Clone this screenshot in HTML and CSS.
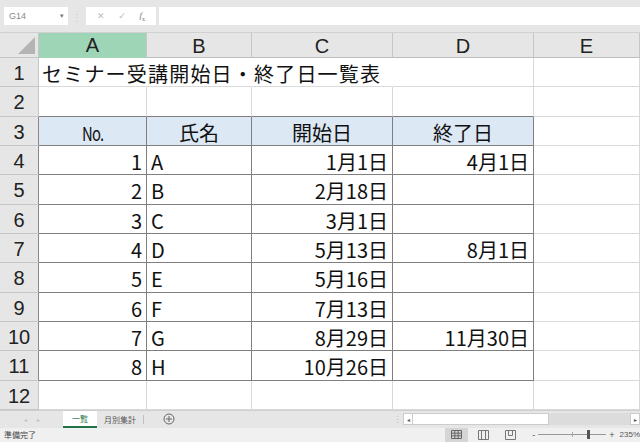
FILE: index.html
```html
<!DOCTYPE html>
<html lang="ja">
<head>
<meta charset="utf-8">
<title>セミナー受講開始日・終了日一覧表</title>
<link rel="stylesheet" href="styles.css">
</head>
<body>
<div class="app">
  <div class="fbar">
    <div class="namebox"><span>G14</span><span class="dd">▾</span></div>
    <div class="dots">⋮</div>
    <div class="fbtns"><span class="x">✕</span><span class="ok">✓</span><span class="fx"><i>f</i><sub>x</sub></span></div>
    <div class="finput"></div>
  </div>
  <div class="sheet">
    <div class="corner"><svg width="20" height="20" viewBox="0 0 20 20"><polygon points="19,2 19,19 2,19" fill="#b4b4b4"/></svg></div>
    <div class="ch sel">A</div><div class="ch">B</div><div class="ch">C</div><div class="ch">D</div><div class="ch">E</div>

    <div class="rh">1</div><div class="c title nr">セミナー受講開始日・終了日一覧表</div><div class="c nr"></div><div class="c nr"></div><div class="c"></div><div class="c"></div>
    <div class="rh">2</div><div class="c tb"></div><div class="c tb"></div><div class="c tb"></div><div class="c tb"></div><div class="c"></div>
    <div class="rh tl">3</div><div class="c t hd"><span class="no">No.</span></div><div class="c t hd">氏名</div><div class="c t hd">開始日</div><div class="c t hd">終了日</div><div class="c"></div>
    <div class="rh tl">4</div><div class="c t r">1</div><div class="c t">A</div><div class="c t r">1月1日</div><div class="c t r">4月1日</div><div class="c"></div>
    <div class="rh tl">5</div><div class="c t r">2</div><div class="c t">B</div><div class="c t r">2月18日</div><div class="c t r"></div><div class="c"></div>
    <div class="rh tl">6</div><div class="c t r">3</div><div class="c t">C</div><div class="c t r">3月1日</div><div class="c t r"></div><div class="c"></div>
    <div class="rh tl">7</div><div class="c t r">4</div><div class="c t">D</div><div class="c t r">5月13日</div><div class="c t r">8月1日</div><div class="c"></div>
    <div class="rh tl">8</div><div class="c t r">5</div><div class="c t">E</div><div class="c t r">5月16日</div><div class="c t r"></div><div class="c"></div>
    <div class="rh tl">9</div><div class="c t r">6</div><div class="c t">F</div><div class="c t r">7月13日</div><div class="c t r"></div><div class="c"></div>
    <div class="rh tl">10</div><div class="c t r">7</div><div class="c t">G</div><div class="c t r">8月29日</div><div class="c t r">11月30日</div><div class="c"></div>
    <div class="rh tl">11</div><div class="c t r">8</div><div class="c t">H</div><div class="c t r">10月26日</div><div class="c t r"></div><div class="c"></div>
    <div class="rh">12</div><div class="c"></div><div class="c"></div><div class="c"></div><div class="c"></div><div class="c"></div>
  </div>
  <div class="tabbar">
    <div class="nav"><span>◂</span><span>▸</span></div>
    <div class="tab active">一覧</div>
    <div class="tab">月別集計</div>
    <div class="tsep"></div>
    <div class="add"><svg width="12" height="12" viewBox="0 0 12 12"><circle cx="6" cy="6" r="5" fill="none" stroke="#666" stroke-width="1"/><path d="M6 3v6M3 6h6" stroke="#666" stroke-width="1"/></svg></div>
    <div class="spacer"></div>
    <div class="vdots">⋮</div>
    <div class="hscroll"><span class="arr">◂</span><div class="thumb"></div><div class="track"></div><span class="arr">▸</span></div>
  </div>
  <div class="status">
    <span class="ready">準備完了</span>
    <div class="spacer"></div>
    <div class="view on"><svg width="11" height="9" viewBox="0 0 11 9"><path d="M0.5 0.5h10v8h-10z M0.5 3.2h10 M0.5 5.8h10 M3.8 0.5v8 M7.2 0.5v8" fill="none" stroke="#666" stroke-width="1"/></svg></div>
    <div class="view"><svg width="11" height="10" viewBox="0 0 11 10"><path d="M0.5 0.5h10v9h-10z M3.5 0.5v9 M7.5 0.5v9" fill="none" stroke="#777" stroke-width="1"/></svg></div>
    <div class="view"><svg width="11" height="10" viewBox="0 0 11 10"><path d="M0.5 0.5h10v9h-10z M3.5 0.5v5h4v-5" fill="none" stroke="#777" stroke-width="1"/></svg></div>
    <div class="zoom"><span class="pm">-</span><div class="slider"><div class="tick"></div><div class="knob"></div></div><span class="pm">+</span></div>
    <span class="pct">235%</span>
  </div>
</div>
</body>
</html>
```
FILE: styles.css
```css
* { box-sizing: border-box; }
html, body { margin: 0; padding: 0; }
body { width: 640px; height: 442px; overflow: hidden; background: #fff; font-family: "Noto Sans CJK JP", "Noto Sans", sans-serif; }
.app { display: flex; flex-direction: column; width: 640px; height: 442px; }

.fbar { height: 33px; background: #e6e6e6; display: flex; align-items: center; padding: 0 0 0 4px; border-bottom: 1px solid #d0d0d0; flex: none; }
.namebox { width: 64px; height: 18px; background: #fff; display: flex; align-items: center; justify-content: space-between; padding: 0 4px 0 5px; font-family: "Liberation Sans", sans-serif; font-size: 9px; color: #888; }
.dd { font-size: 7px; color: #777; }
.dots { width: 18px; text-align: center; color: #c8c8c8; font-size: 10px; }
.fbtns { width: 70px; height: 18px; background: #fff; display: flex; align-items: center; justify-content: space-around; padding: 0 4px; font-size: 9px; color: #bbb; font-family: "DejaVu Sans", sans-serif; }
.fbtns .fx { color: #777; font-family: "Liberation Serif", serif; font-size: 9px; }
.fbtns sub { font-size: 6px; }
.finput { flex: 1; height: 18px; background: #fff; margin-left: 3px; }

.sheet { display: grid; grid-template-columns: 39px 108px 105px 141px 141px 106px; grid-template-rows: 25px repeat(12, 29.33px); flex: none; }
.corner { background: #e6e6e6; border-right: 1px solid #c6c6c6; border-bottom: 1px solid #c6c6c6; display: flex; align-items: flex-end; justify-content: flex-end; padding: 0 2px 2px 0; }
.ch { background: #e6e6e6; border-right: 1px solid #c6c6c6; border-bottom: 1px solid #bdbdbd; display: flex; align-items: center; justify-content: center; font-family: "Liberation Sans", sans-serif; font-size: 20px; color: #222; padding-top: 2px; }
.ch.sel { background: #9fd5b7; border-bottom: 2px solid #9fd5b7; }
.rh { background: #e6e6e6; border-right: 1px solid #c6c6c6; border-bottom: 1px solid #c6c6c6; display: flex; align-items: center; justify-content: center; font-family: "Liberation Sans", sans-serif; font-size: 20px; color: #222; padding-top: 3px; }
.rh.tl { border-right-color: #8a8a8a; }

.c { border-right: 1px solid #d9d9d9; border-bottom: 1px solid #d9d9d9; display: flex; align-items: center; padding: 3px 4px 0; font-size: 20px; color: #111; white-space: nowrap; overflow: visible; font-family: "Noto Sans CJK JP", sans-serif; }
.c.nr { border-right-color: transparent; }
.c.title { letter-spacing: 1.2px; padding-left: 3px; position: relative; z-index: 1; }
.c.tb { border-bottom-color: #7f7f7f; }
.c.t { border-right-color: #7f7f7f; border-bottom-color: #7f7f7f; }
.c.hd { background: #dde8f5; justify-content: center; }
.c.r { justify-content: flex-end; }
.no { display: inline-block; transform: scaleX(0.78); letter-spacing: -1px; font-size: 19px; }

.tabbar { height: 18px; background: #e6e6e6; border-top: 1px solid #cfcfcf; display: flex; align-items: stretch; flex: none; }
.nav { width: 63px; display: flex; align-items: center; justify-content: center; gap: 10px; font-size: 6px; color: #c0c0c0; }
.tab { padding: 0 7px; display: flex; align-items: center; font-size: 8px; color: #555; }
.tab.active { background: #fff; color: #217346; border-bottom: 2px solid #217346; padding: 0 9px; }
.tsep { width: 1px; background: #c0c0c0; margin: 4px 0; }
.add { width: 50px; display: flex; align-items: center; justify-content: center; }
.spacer { flex: 1; }
.vdots { width: 10px; color: #bbb; font-size: 9px; display: flex; align-items: center; }
.hscroll { width: 237px; display: flex; align-items: center; gap: 0; padding: 3px 0; }
.hscroll .arr { width: 10px; height: 12px; background: #fff; border: 1px solid #ccc; font-size: 6px; color: #555; display: flex; align-items: center; justify-content: center; }
.thumb { width: 136px; height: 12px; background: #fff; border: 1px solid #ccc; border-left: none; }
.track { flex: 1; height: 12px; background: #dcdcdc; }

.status { height: 14px; background: #f0f0f0; display: flex; align-items: center; flex: none; }
.ready { font-size: 8px; color: #444; padding-left: 4px; }
.view { width: 23px; height: 14px; display: flex; align-items: center; justify-content: center; margin-right: 4px; }
.view.on { background: #d5d5d5; }
.zoom { display: flex; align-items: center; gap: 3px; margin-left: 6px; }
.pm { font-size: 9px; color: #555; font-family: "Liberation Sans", sans-serif; }
.slider { width: 68px; height: 1px; background: #999; position: relative; }
.tick { position: absolute; left: 34px; top: -2px; width: 1px; height: 5px; background: #aaa; }
.knob { position: absolute; left: 49px; top: -4px; width: 3px; height: 9px; background: #555; }
.pct { font-size: 8px; color: #555; padding-left: 5px; font-family: "Liberation Sans", sans-serif; }
```
